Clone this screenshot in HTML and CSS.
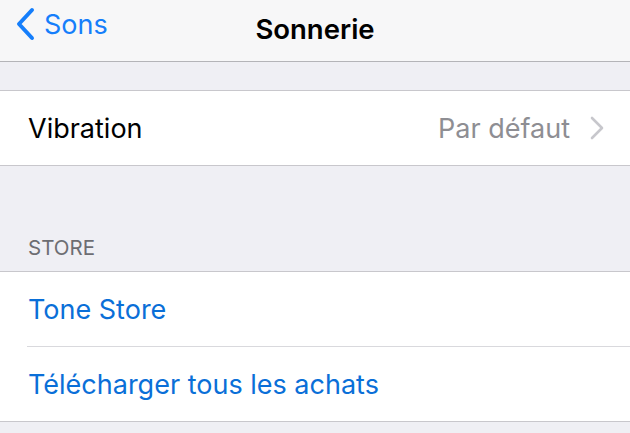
FILE: index.html
```html
<!DOCTYPE html>
<html lang="fr">
<head>
  <meta charset="UTF-8">
  <title>Sonnerie</title>
  <meta name="viewport" content="width=device-width">
  <link rel="stylesheet" href="styles.css">
</head>
<body>
  <header class="navbar">
    <a class="back" href="#">
      <svg class="back-icon" width="22" height="34" viewBox="0 0 22 34">
        <path d="M18 3 L5 17 L18 31" fill="none" stroke="#157efb" stroke-width="4" stroke-linecap="round" stroke-linejoin="round"/>
      </svg>
      <span>Sons</span>
    </a>
    <h1 class="title">Sonnerie</h1>
  </header>

  <div class="spacer"></div>
  <ul class="group">
    <li class="cell">
      <span class="label">Vibration</span>
      <span class="detail">Par défaut
        <svg class="chevron" width="14" height="24" viewBox="0 0 14 24">
          <path d="M2 2 L12 12 L2 22" fill="none" stroke="#c7c7cc" stroke-width="2.6" stroke-linecap="round" stroke-linejoin="round"/>
        </svg>
      </span>
    </li>
  </ul>

  <div class="section-header">STORE</div>
  <ul class="group">
    <li class="cell link">Tone Store</li>
    <li class="cell link">Télécharger tous les achats</li>
  </ul>
</body>
</html>
```

FILE: styles.css
```css
body {
  font-family: "Inter", "Roboto", sans-serif;
  margin: 0;
  padding: 0;
  background: #efeff4;
}

.navbar {
  position: relative;
  height: 61px;
  background: #f7f7f8;
  border-bottom: 1px solid #b4b4b8;
  display: flex;
  align-items: center;
  justify-content: center;
}

.back {
  position: absolute;
  left: 14px;
  top: 7px;
  display: flex;
  align-items: center;
  gap: 8px;
  color: #157efb;
  text-decoration: none;
  font-size: 27px;
}

.title {
  margin: 0 0 4px;
  font-size: 27.5px;
  font-weight: 600;
  color: #000;
}

.spacer {
  height: 28px;
}

.group {
  margin: 0;
  padding: 0;
  list-style: none;
  background: #fff;
  border-top: 1px solid #c8c7cc;
  border-bottom: 1px solid #c8c7cc;
}

.cell {
  height: 74px;
  padding: 0 26px 0 28px;
  display: flex;
  align-items: center;
  justify-content: space-between;
  font-size: 27px;
  color: #000;
}

.cell + .cell {
  border-top: 1px solid #d9d9dd;
  margin-left: 27px;
  padding-left: 1px;
}

.detail {
  display: flex;
  align-items: center;
  gap: 20px;
  color: #8e8e93;
}

.link {
  color: #0a6fd8;
}

.section-header {
  height: 105px;
  box-sizing: border-box;
  padding: 0 28px 11px;
  display: flex;
  align-items: flex-end;
  font-size: 20.5px;
  color: #6d6d72;
}
```
